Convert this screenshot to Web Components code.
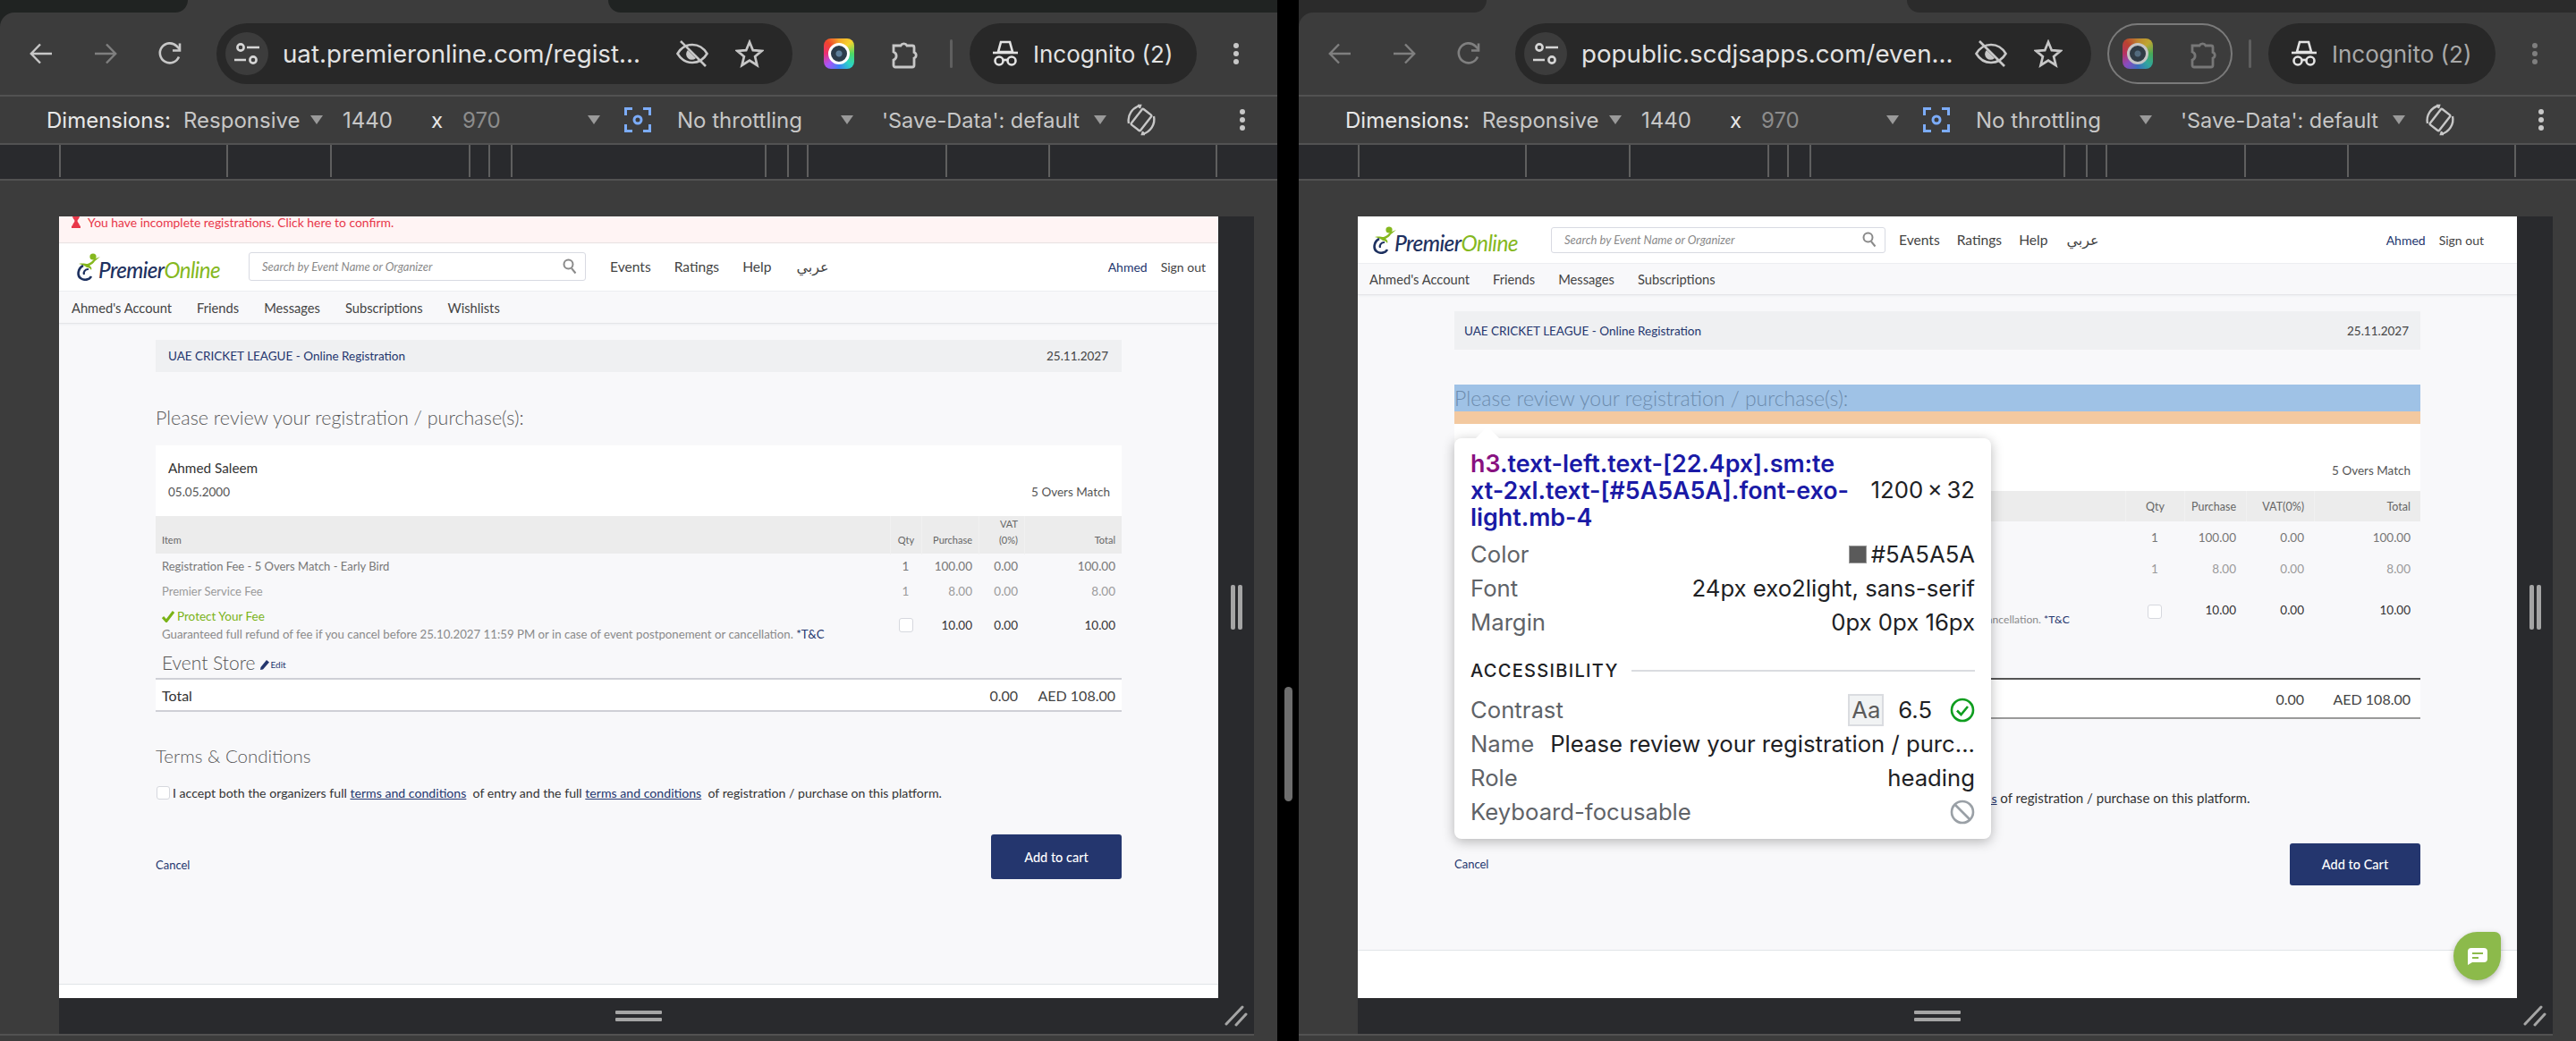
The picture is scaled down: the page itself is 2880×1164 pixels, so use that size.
<!DOCTYPE html>
<html lang="en"><head><meta charset="utf-8"><title>Premier Online</title>
<style>
html,body{margin:0;padding:0;background:#000}
body{width:2880px;height:1164px;overflow:hidden}
</style></head><body>
<split-view>
<browser-window slot="a" url="uat.premieronline.com/regist..." tab-bg="#202322">
  <po-page variant="uat">
    <po-banner>You have incomplete registrations. Click here to confirm.</po-banner>
    <po-header></po-header>
    <po-subnav items="Ahmed's Account|Friends|Messages|Subscriptions|Wishlists"></po-subnav>
    <po-main>
      <po-bar date="25.11.2027">UAE CRICKET LEAGUE - Online Registration</po-bar>
      <po-heading>Please review your registration / purchase(s):</po-heading>
      <po-card name="Ahmed Saleem" date="05.05.2000" match="5 Overs Match"></po-card>
      <reg-head vat-break></reg-head>
      <reg-row tone="a" item="Registration Fee - 5 Overs Match - Early Bird" qty="1" purchase="100.00" vat="0.00" total="100.00"></reg-row>
      <reg-row tone="b" item="Premier Service Fee" qty="1" purchase="8.00" vat="0.00" total="8.00"></reg-row>
      <protect-row purchase="10.00" vat="0.00" total="10.00"></protect-row>
      <event-store></event-store>
      <reg-total vat="0.00" total="AED 108.00"></reg-total>
      <po-terms></po-terms>
      <po-actions label="Add to cart"></po-actions>
    </po-main>
    <po-footer></po-footer>
  </po-page>
</browser-window>
<browser-window slot="b" url="popublic.scdjsapps.com/even..." dim outlined tab-bg="#2b2b2b">
  <po-page variant="pop">
    <po-header></po-header>
    <po-subnav items="Ahmed's Account|Friends|Messages|Subscriptions"></po-subnav>
    <po-main>
      <po-bar date="25.11.2027">UAE CRICKET LEAGUE - Online Registration</po-bar>
      <po-heading inspected>Please review your registration / purchase(s):<devtools-tooltip slot="over"></devtools-tooltip></po-heading>
      <po-card match="5 Overs Match"></po-card>
      <reg-head covered></reg-head>
      <reg-row tone="a" qty="1" purchase="100.00" vat="0.00" total="100.00"></reg-row>
      <reg-row tone="b" qty="1" purchase="8.00" vat="0.00" total="8.00"></reg-row>
      <protect-row covered purchase="10.00" vat="0.00" total="10.00"></protect-row>
      <reg-total covered vat="0.00" total="AED 108.00"></reg-total>
      <po-terms covered></po-terms>
      <po-actions label="Add to Cart"></po-actions>
    </po-main>
    <po-footer></po-footer>
    <chat-bubble></chat-bubble>
  </po-page>
</browser-window>
</split-view>
<script>
const def=(name,css,html)=>customElements.define(name,class extends HTMLElement{
  connectedCallback(){ if(this.shadowRoot) return;
    const r=this.attachShadow({mode:'open'});
    r.innerHTML='<style>'+css+'</style>'+(typeof html==='function'?html(this):html);
  }});
const UI='"Inter","Liberation Sans",sans-serif';
const PO='"Lato","Liberation Sans",sans-serif';

/* ---------- outer split ---------- */
def('split-view',`
:host{display:grid;grid-template-columns:1428px 24px 1428px;width:2880px;height:1164px;background:#000}
.gutter{display:flex;justify-content:center;padding-top:768px;box-sizing:border-box}
.thumb{width:9px;height:128px;border-radius:5px;background:#6e6e6e}
`,`<slot name="a"></slot><div class="gutter"><div class="thumb"></div></div><slot name="b"></slot>`);

/* ---------- browser chrome ---------- */
const ic={
 back:`<svg width="28" height="28" viewBox="0 0 28 28" fill="none" stroke="currentColor" stroke-width="2.4"><path d="M26 14H3M13 3.5L2.8 14 13 24.5"/></svg>`,
 fwd:`<svg width="28" height="28" viewBox="0 0 28 28" fill="none" stroke="currentColor" stroke-width="2.4"><path d="M2 14h23M15 3.5L25.2 14 15 24.5"/></svg>`,
 reload:`<svg width="28" height="28" viewBox="0 0 28 28" fill="none" stroke="currentColor" stroke-width="2.6"><path d="M24 17.5A11 11 0 1 1 21.5 5.5L25 9"/><path d="M25 2.5v8h-8"/></svg>`,
 tune:`<svg width="28" height="26" viewBox="0 0 28 26" fill="none" stroke="currentColor" stroke-width="2.6"><circle cx="7" cy="6" r="3.6"/><path d="M14 6h14M0 20h13"/><circle cx="21" cy="20" r="3.6"/></svg>`,
 eye:`<svg width="36" height="30" viewBox="0 0 36 30" fill="none" stroke="currentColor" stroke-width="2.6"><path d="M1.5 15C6 7.5 12 5 18 5s12 2.500 16.500 10C30 22.500 24 25 18 25S6 22.500 1.500 15z"/><path d="M13 11a6 6 0 0 0 9 9z" fill="currentColor" stroke="none"/><path d="M5 1l28 28"/></svg>`,
 star:`<svg width="32" height="32" viewBox="0 0 32 32" fill="none" stroke="currentColor" stroke-width="2.7" stroke-linejoin="miter"><path d="M16 3l3.800 9.200 9.900.7-7.600 6.400 2.400 9.700L16 23.700 7.500 29l2.400-9.700L2.300 12.900l9.900-.7z"/></svg>`,
 puzzle:`<svg width="30" height="34" viewBox="0 0 30 34" fill="none" stroke="currentColor" stroke-width="2.800"><path d="M3 8h8a4 4 0 0 1 7 0h6a2 2 0 0 1 2 2v5.500a3.500 3.500 0 0 1 0 6.500V30a2 2 0 0 1-2 2H5a2 2 0 0 1-2-2v-6a4.800 4.800 0 0 0 0-9z"/></svg>`,
 spy:`<svg width="30" height="30" viewBox="0 0 30 30" fill="none" stroke="currentColor" stroke-width="2.600"><path d="M10 2h10l3 11H7z"/><path d="M1 14h28"/><circle cx="8" cy="23" r="4.500"/><circle cx="22" cy="23" r="4.500"/><path d="M12.500 22h5"/></svg>`,
 dots:`<svg width="8" height="26" viewBox="0 0 8 26" fill="currentColor"><circle cx="4" cy="4" r="3"/><circle cx="4" cy="13" r="3"/><circle cx="4" cy="22" r="3"/></svg>`,
 capture:`<svg width="30" height="28" viewBox="0 0 30 28" fill="none" stroke="#7cacf8" stroke-width="3"><path d="M9 1.500H1.500V9M21 1.500h7.500V9M9 26.500H1.500V19M21 26.500h7.500V19"/><circle cx="15" cy="14" r="4"/></svg>`,
 rotate:`<svg width="36" height="36" viewBox="0 0 36 36" fill="none" stroke="#c7c7c7" stroke-width="2.400"><rect x="11.500" y="7" width="13" height="22" rx="1.500" transform="rotate(38 18 18)"/><path d="M4 22C2 13 8 4 17 2M14 2l3 0-1 3"/><path d="M32 14c2 9-4 18-13 20M22 34l-3 0 1-3"/></svg>`
};
def('browser-window',`
:host{display:block;width:1428px;height:1164px;background:#3c3c3c;font-family:${UI};overflow:hidden}
.tabs{display:flex;height:14px;background:#3c3c3c}
.tabs i{display:block;background:var(--t)}
.tabs i:first-child{width:210px;border-bottom-right-radius:14px}
.tabs b{display:block;width:470px}
.tabs i:last-child{flex:1;border-bottom-left-radius:14px}
.bgwrap{background:var(--t)}
.bar{height:92px;background:#3c3c3c;border-radius:16px 0 0 0;display:flex;align-items:center;color:#c7c7c7;box-sizing:border-box;padding-left:10px}
.nb{width:72px;display:flex;justify-content:center}
.dimc{color:#7f7f7f}
.omni{margin-left:16px;width:644px;height:68px;border-radius:34px;background:#282828;display:flex;align-items:center;box-sizing:border-box;padding:0 16px 0 10px}
.site{width:48px;height:48px;border-radius:50%;background:#3c3c3c;display:flex;align-items:center;justify-content:center;color:#d5d5d5;flex:none}
.url{flex:1;margin-left:16px;font-size:27.700px;color:#e3e3e3;white-space:nowrap;overflow:hidden}
.oi{width:64px;display:flex;justify-content:center;flex:none}
.ext{margin-left:18px;width:140px;height:68px;box-sizing:border-box;border:2px solid transparent;border-radius:34px;display:flex;align-items:center;padding-left:15px}
:host([outlined]) .ext{border-color:#7a7a7a}
.app{width:34px;height:34px;border-radius:8px;background:conic-gradient(#f4a62a,#f6d32d,#4cd964,#2bd3c6,#3b82f6,#a855f7,#ec2f75,#f0462c,#f4a62a);display:flex;align-items:center;justify-content:center;flex:none}
.app span{width:18px;height:18px;border-radius:50%;background:radial-gradient(circle,#5e7f9a 0 3px,#2c3c4b 4px 100%);border:3.500px solid #fff}
:host([outlined]) .app{opacity:.7}
.pz{margin-left:41px;display:flex}
:host([outlined]) .pz{color:#777}
.div{margin-left:18px;width:3px;height:32px;background:#5f5f5f;border-radius:2px}
.inc{margin-left:19px;width:254px;height:68px;border-radius:34px;background:#282828;display:flex;align-items:center;padding-left:25px;box-sizing:border-box;color:#e3e3e3;font-size:26px;gap:16px;white-space:nowrap}
:host([outlined]) .inc span{color:#a8a8a8}
.mn{margin-left:40px;display:flex}
.line{height:2px;background:#525252}
.dev{height:52px;display:grid;grid-template-columns:52px 153px 140px 38px 89px 45px 138px 43px 59px 181px 48px 235px 37px 127px 20px;align-items:center;font-size:24px;color:#c7c7c7;white-space:nowrap}
.dev .tri{width:0;height:0;border-left:7px solid transparent;border-right:7px solid transparent;border-top:10px solid #9a9a9a;margin-left:2px}
.dev .w{color:#e8e8e8}.dev .g{color:#8c8c8c}
.dev .sd{font-size:23.500px}
.dev svg{display:block}
.ruler{height:38px;background:#292a2d}
.ruler svg{display:block}
.vp{display:grid;grid-template-columns:66px 1296px 40px 26px;grid-template-rows:40px 874px 40px 2px 6px}
.hold{grid-column:2/3;grid-row:2}
.dk{background:#292a2d;display:flex;align-items:center;justify-content:center}
.side{grid-column:3;grid-row:2;gap:3px}
.side i{display:block;width:5px;height:50px;background:#a5a5a5;border-radius:2px}
.bot{grid-column:2;grid-row:3;flex-direction:column;gap:4px}
.bot i{display:block;width:52px;height:4px;background:#a5a5a5;border-radius:1px}
.corner{grid-column:3;grid-row:3}
.bl{grid-column:1/4;grid-row:4;background:#525252}
::slotted(po-page){height:874px}
`,h=>{
 const d=h.hasAttribute('dim');
 const ticks=[67,254,370,525,547,572,856,881,903,1058,1173,1360].map(x=>'M'+x+' 0v36').join('');
 return `<div style="--t:${h.getAttribute('tab-bg')}">
 <div class="tabs"><i></i><b></b><i></i></div>
 <div class="bgwrap"><div class="bar">
  <div class="nb ${d?'dimc':''}">${ic.back}</div><div class="nb dimc">${ic.fwd}</div><div class="nb ${d?'dimc':''}">${ic.reload}</div>
  <div class="omni"><div class="site">${ic.tune}</div><div class="url">${h.getAttribute('url')}</div><div class="oi">${ic.eye}</div><div class="oi">${ic.star}</div></div>
  <div class="ext"><div class="app"><span></span></div><div class="pz">${ic.puzzle}</div></div>
  <div class="div"></div>
  <div class="inc">${ic.spy}<span>Incognito (2)</span></div>
  <div class="mn ${d?'dimc':''}">${ic.dots}</div>
 </div></div></div>
 <div class="line"></div>
 <div class="dev"><span></span><span class="w">Dimensions:</span><span>Responsive</span><div class="tri"></div><span>1440</span><span class="w" style="padding-left:10px">x</span><span class="g">970</span><div class="tri"></div><div>${ic.capture}</div><span>No throttling</span><div class="tri"></div><span class="sd">'Save-Data': default</span><div class="tri"></div><div>${ic.rotate}</div><div style="color:#c7c7c7">${ic.dots}</div></div>
 <div class="line"></div>
 <div class="ruler"><svg width="1428" height="38"><path d="${ticks}" stroke="#5f5f5f" stroke-width="2"/></svg></div>
 <div class="line"></div>
 <div class="vp">
  <div class="hold"><slot></slot></div>
  <div class="dk side"><i></i><i></i></div>
  <div class="dk bot"><i></i><i></i></div>
  <div class="dk corner"><svg width="26" height="26" viewBox="0 0 26 26" stroke="#a5a5a5" stroke-width="3" stroke-linecap="round"><path d="M2 22L20 3M13 23L24 11"/></svg></div>
  <div class="bl"></div>
 </div>`;
});

/* ---------- Premier Online page ---------- */
def('po-page',`
:host{display:flex;flex-direction:column;position:relative;height:874px;background:#f8f8fa;font-family:${PO};color:#444;font-size:13px;overflow:hidden;
 --cols:821px 35px 64px 51px 109px;--pad:7px;--rowh:28px;--headh:42px;--cardh:79px;--hdrh:55px;--subh:36px;--barh:36px;
 --h3gap:36px;--h3mb:16px;--h3fs:21.500px;--rr:47px;--toth:34px;--tl1:#cfd0d6;--tl2:#cfd0d6;--actmt:37px;--footh:16px;--termmt:36px;
 --srchw:377px;--srchh:32px;--hpl:20px;--logow:192px;--navml:27px;--navgap:26px;--hpr:14px;--subpl:14px;--subgap:28px;--cancelmb:8px;--chkmt:18px;--gsize:13.240px;
 --hfs:11px;--vpt:14px;--gpt:4px;--cpt:16px;--btnh:50px;--cardpr:13px;--barpr:15px;--tail:14.130px;--logofs:24.200px}
:host([variant=pop]){--cols:750px 66px 69px 76px 119px;--pad:11px;--rowh:35px;--headh:34px;--cardh:75px;--hdrh:53px;--subh:35px;--barh:43px;
 --h3gap:39px;--h3mb:0px;--h3fs:23px;--rr:105px;--toth:42px;--tl1:#555;--tl2:#9a9a9a;--actmt:41px;--footh:54px;--termmt:34px;
 --srchw:374px;--srchh:29px;--hpl:17px;--logow:199px;--navml:15px;--navgap:19px;--hpr:37px;--subpl:13px;--subgap:26px;--cancelmb:16px;--gsize:12.100px;
 --hfs:12.500px;--vpt:19px;--gpt:10px;--cpt:23px;--btnh:47px;--cardpr:11px;--barpr:13px;--tail:15.100px;--logofs:24.500px}
`,`<slot></slot>`);

def('po-banner',`
:host{display:flex;align-items:flex-start;height:29px;background:#fff4f4;color:#e8384a;font-size:13.900px;line-height:14px;padding-left:14px;box-shadow:0 1px 1px #e9e3e3;position:relative;z-index:2;overflow:hidden;white-space:nowrap;flex:none}
svg{margin-top:-3px;margin-right:8px;flex:none}
span{display:block}
`,`<svg width="10" height="16" viewBox="0 0 10 16" fill="#e8384a"><path d="M0 0h10v2.500H9c0 3-2.500 4-2.500 5.500S9 11 9 13.500h1V16H0v-2.500h1C1 11 3.500 9.500 3.500 8S1 5.500 1 2.500H0z"/></svg><span><slot></slot></span>`);

def('po-logo',`
:host{display:flex;align-items:flex-end;flex:none;height:31px}
svg{flex:none;display:block}
.t{font:italic 500 var(--logofs)/24px ${PO};letter-spacing:-.6px;margin-left:-4px;white-space:nowrap}
.p{color:#1e3160}.o{color:#85b81e;font-weight:400}
`,`<svg width="28" height="31" viewBox="0 0 28 31" fill="none"><circle cx="18" cy="4" r="3.600" fill="#85b81e"/><path d="M2 12c5-1 7 0 10 0 3-1 5-3 7-5l7-3-6 5c-1 2-4 4-6 5 2 1 3 3 2 5-1-2-3-3-5-3-2-2-5-3-9-4z" fill="#85b81e"/><path d="M7 14C1 17 0 25 4 28c4 3 10 2 12-2" stroke="#1e3160" stroke-width="2.600"/><path d="M8 24c-1-3 1-6 5-6" stroke="#1e3160" stroke-width="2.200"/></svg><div class="t"><span class="p">Premier</span><span class="o">Online</span></div>`);

def('po-header',`
:host{display:flex;align-items:center;height:var(--hdrh);flex:none;background:#fff;box-sizing:border-box;padding:0 var(--hpr) 0 var(--hpl);font-size:15.600px;color:#444;white-space:nowrap;border-bottom:1px solid #eceef1}
.lw{width:var(--logow);flex:none}
.s{width:var(--srchw);height:var(--srchh);border:1.500px solid #d8dae2;border-radius:3px;box-sizing:border-box;display:flex;align-items:center;justify-content:space-between;padding:0 9px 0 14px;color:#8a8a8a;font-style:italic;font-size:13px;flex:none}
.s svg{flex:none}
nav{display:flex;gap:var(--navgap);margin-left:var(--navml);align-items:center}
.ar{font-family:"DejaVu Sans",sans-serif;font-size:16px;margin-left:2px}
.u{margin-left:auto;display:flex;gap:15px;font-size:14px}
.u b{font-weight:400;color:#24366e}
`,`<div class="lw"><po-logo></po-logo></div><div class="s"><span>Search by Event Name or Organizer</span><svg width="16" height="18" viewBox="0 0 16 18" fill="none" stroke="#8a8a8a" stroke-width="2"><circle cx="6.500" cy="6.500" r="5"/><path d="M10 11l4.500 5.500"/></svg></div><nav><span>Events</span><span>Ratings</span><span>Help</span><span class="ar" lang="ar">عربي</span></nav><div class="u"><b>Ahmed</b><span>Sign out</span></div>`);

def('po-subnav',`
:host{display:flex;align-items:center;height:var(--subh);flex:none;box-sizing:border-box;padding-left:var(--subpl);gap:var(--subgap);background:#f8f8fa;font-size:14.700px;color:#444;border-bottom:1px solid #e4e5e8;box-shadow:0 1px 2px #eceef1;white-space:nowrap}
`,h=>h.getAttribute('items').split('|').map(t=>`<span>${t}</span>`).join(''));

def('po-main',`
:host{display:flex;flex-direction:column;flex:1;margin:0 108px;padding-top:18px;width:1080px;min-height:0}
`,`<slot></slot>`);

def('po-bar',`
:host{display:flex;align-items:center;justify-content:space-between;height:var(--barh);flex:none;background:#eff0f2;padding:0 var(--barpr) 0 14px;font-size:13.500px;color:#24366e;white-space:nowrap}
:host-context(po-page[variant=pop]){padding-left:11px}
.d{color:#444}
`,h=>`<span><slot></slot></span><span class="d">${h.getAttribute('date')}</span>`);

def('po-heading',`
:host{display:block;position:relative;margin-top:var(--h3gap);margin-bottom:var(--h3mb);flex:none}
h3{margin:0;font:300 var(--h3fs)/30px ${PO};color:#5a5a5a;white-space:nowrap}
:host([inspected]) h3{background:#9fc2e6;color:#6d8cad}
.m{height:14px;background:#f3c9a0;display:none}
:host([inspected]) .m{display:block}
`,`<h3><slot></slot></h3><div class="m"></div><slot name="over"></slot>`);

def('po-card',`
:host{display:flex;flex-direction:column;height:var(--cardh);flex:none;background:#fff;padding:14px var(--cardpr) 0 14px;box-sizing:border-box;font-size:13.500px;color:#555;white-space:nowrap}
.n{color:#333;font-size:15.300px;line-height:22px;min-height:22px}
.r{display:flex;justify-content:space-between;margin-top:8px}
`,h=>`<div class="n">${h.getAttribute('name')||''}</div><div class="r"><span>${h.getAttribute('date')||''}</span><span>${h.getAttribute('match')}</span></div>`);

const cell=`display:flex;align-items:center;box-sizing:border-box`;
def('reg-head',`
:host{display:grid;grid-template-columns:var(--cols);height:var(--headh);flex:none;background:#ececec;font-size:var(--hfs);color:#666}
div{${cell};padding-right:var(--pad);justify-content:flex-end;text-align:right;line-height:18px;align-items:flex-end;padding-bottom:7px;border-left:1px solid #f1f1f1;white-space:nowrap}
div.f{justify-content:flex-start;padding-left:var(--pad);border:0}
:host([covered]) div.f span{visibility:hidden}
div.q{justify-content:center;padding:0 0 7px}
`,h=>`<div class="f"><span>Item</span></div><div class="q">Qty</div><div>Purchase</div><div>${h.hasAttribute('vat-break')?'VAT<br>(0%)':'VAT(0%)'}</div><div>Total</div>`);

def('reg-row',`
:host{display:grid;grid-template-columns:var(--cols);height:var(--rowh);flex:none;font-size:13.500px;color:#777;white-space:nowrap}
:host([tone=b]){color:#9a9a9a}
div{${cell};justify-content:flex-end;padding-right:var(--pad)}
div.f{justify-content:flex-start;padding-left:var(--pad);font-size:13px}
div.q{justify-content:center;padding:0}
`,h=>`<div class="f">${h.getAttribute('item')||''}</div><div class="q">${h.getAttribute('qty')}</div><div>${h.getAttribute('purchase')}</div><div>${h.getAttribute('vat')}</div><div>${h.getAttribute('total')}</div>`);

def('protect-row',`
:host{display:grid;grid-template-columns:var(--cols);height:var(--rr);flex:none;font-size:13.500px;color:#333;white-space:nowrap;align-items:start}
.i{padding:var(--gpt) 0 0 var(--pad);line-height:20px;min-width:0}
.p{color:#7ab317;display:flex;align-items:center;gap:3px}
:host([covered]) .p{visibility:hidden}
.g{color:#8a8a8a;font-size:var(--gsize)}
.g b{font-weight:400;color:#24366e}
.v{text-align:right;padding:var(--vpt) var(--pad) 0 0;line-height:20px}
.c{display:flex;justify-content:center;padding-top:var(--cpt)}
.c i{display:block;width:16px;height:16px;box-sizing:border-box;border:1.500px solid #d6d8de;border-radius:3px;background:#fff}
`,h=>`<div class="i"><div class="p"><svg width="14" height="13" viewBox="0 0 14 13"><path d="M1 7l4 4.500L13 1" fill="none" stroke="#7ab317" stroke-width="3"/></svg>Protect Your Fee</div><div class="g">Guaranteed full refund of fee if you cancel before 25.10.2027 11:59 PM or in case of event postponement or cancellation. <b>*T&amp;C</b></div></div><div class="c"><i></i></div><div class="v">${h.getAttribute('purchase')}</div><div class="v">${h.getAttribute('vat')}</div><div class="v">${h.getAttribute('total')}</div>`);

def('event-store',`
:host{display:flex;align-items:center;height:36px;flex:none;padding-left:var(--pad);gap:5px;font-size:21px;font-weight:300;color:#555;white-space:nowrap}
a{display:flex;align-items:center;gap:2px;font-size:10px;font-weight:400;color:#24366e;margin-top:6px}
`,`<span>Event Store</span><a><svg width="10" height="11" viewBox="0 0 10 11" fill="#24366e"><path d="M7 0l3 2.500L3 10.500 0 11l.5-3z"/></svg>Edit</a>`);

def('reg-total',`
:host{display:grid;grid-template-columns:var(--cols);height:var(--toth);flex:none;background:#fff;font-size:16px;color:#444;border-top:2px solid var(--tl1);border-bottom:2px solid var(--tl2);white-space:nowrap}
div{${cell};justify-content:flex-end;padding-right:var(--pad)}
div.f{justify-content:flex-start;padding-left:var(--pad);color:#333}
:host([covered]) div.f span{visibility:hidden}
`,h=>`<div class="f"><span>Total</span></div><div></div><div></div><div>${h.getAttribute('vat')}</div><div>${h.getAttribute('total')}</div>`);

def('po-terms',`
:host{display:block;margin-top:var(--termmt);flex:none}
h4{margin:0;font:300 20.500px/26px ${PO};color:#5a5a5a}
:host([covered]) h4{visibility:hidden}
.r{display:flex;align-items:center;margin-top:var(--chkmt);height:20px;font-size:14.130px;color:#333;white-space:nowrap}
i{display:block;width:15px;height:15px;box-sizing:border-box;border:1.500px solid #d6d8de;border-radius:3px;background:#fff;margin-right:3px;margin-left:1px;flex:none}
a{color:#24366e;text-decoration:underline}
.tail{font-size:var(--tail)}
`,h=>{const sp=h.hasAttribute('covered')?' ':'&nbsp; ';return `<h4>Terms &amp; Conditions</h4><div class="r"><i></i><span>I accept both the organizers full <a>terms and conditions</a>${sp}of entry and the full <a>terms and conditions</a>${sp}<span class="tail">of registration / purchase on this platform.</span></span></div>`});

def('po-actions',`
:host{display:flex;justify-content:space-between;align-items:flex-end;margin-top:var(--actmt);flex:none}
a{color:#24366e;font-size:13px;margin-bottom:var(--cancelmb)}
button{all:unset;box-sizing:border-box;display:flex;align-items:center;justify-content:center;width:146px;height:var(--btnh);background:#24366e;color:#fff;font:500 14.500px ${PO};border-radius:3px}
`,h=>`<a>Cancel</a><button>${h.getAttribute('label')}</button>`);

def('po-footer',`
:host{display:block;height:var(--footh);flex:none;background:#fff;border-top:1px solid #e1e5e8;margin-top:auto;box-sizing:border-box}
`,``);

def('chat-bubble',`
:host{position:absolute;right:18px;bottom:20px;width:53px;height:54px;background:#8cba4b;border-radius:50% 7px 50% 50%;box-shadow:0 3px 7px rgba(0,0,0,.28);display:flex;align-items:center;justify-content:center}
`,`<svg width="22" height="19" viewBox="0 0 22 19"><path d="M4 0h14a4 4 0 0 1 4 4v8a4 4 0 0 1-4 4H5l-5 3V4a4 4 0 0 1 4-4z" fill="#fff"/><path d="M5 6h12M5 11h7" stroke="#8cba4b" stroke-width="2"/></svg>`);

/* ---------- DevTools inspect tooltip ---------- */
def('devtools-tooltip',`
:host{position:absolute;left:0;top:60px;width:600px;height:448px;background:#fff;border-radius:8px;box-shadow:0 3px 14px rgba(0,0,0,.28);box-sizing:border-box;padding:13px 18px 0;font:400 25.700px/38px ${UI};color:#202124;z-index:5;white-space:nowrap}
.arr{position:absolute;left:24px;top:-13px;width:0;height:0;border-left:13px solid transparent;border-right:13px solid transparent;border-bottom:13px solid #fff}
.h{display:flex;justify-content:space-between;align-items:center;line-height:30px;margin-bottom:8px}
.t{font-weight:600;color:#1a1aa6;font-size:26.800px}
.t em{font-style:normal;color:#881280}
.r{display:flex;justify-content:space-between;align-items:center;height:38px}
.l{color:#5f6368}
.v{display:flex;align-items:center}
.sw{width:20px;height:20px;background:#5a5a5a;border:1px solid #999;box-sizing:border-box;margin-right:5px}
.a{display:flex;align-items:center;gap:14px;height:34px;margin:18px 0 8px;font-size:20px;font-weight:500;letter-spacing:1.300px;color:#202124}
.a i{display:block;flex:1;height:2px;background:#dadce0}
.aa{width:40px;height:36px;box-sizing:border-box;border:2px solid #dadce0;background:#f1f3f4;display:flex;align-items:center;justify-content:center;margin-right:16px;color:#5a5a5a}
.n{margin-right:20px}
svg{display:block}
`,`<div class="arr"></div>
<div class="h"><div class="t"><em>h3</em>.text-left.text-[22.4px].sm:te<br>xt-2xl.text-[#5A5A5A].font-exo-<br>light.mb-4</div><div>1200&#8201;×&#8201;32</div></div>
<div class="r"><span class="l">Color</span><span class="v"><span class="sw"></span>#5A5A5A</span></div>
<div class="r"><span class="l">Font</span><span>24px exo2light, sans-serif</span></div>
<div class="r"><span class="l">Margin</span><span>0px 0px 16px</span></div>
<div class="a"><span>ACCESSIBILITY</span><i></i></div>
<div class="r"><span class="l">Contrast</span><span class="v"><span class="aa">Aa</span><span class="n">6.5</span><svg width="28" height="28" viewBox="0 0 28 28" fill="none" stroke="#0f9d1f" stroke-width="2.600"><circle cx="14" cy="14" r="12"/><path d="M8 14.500l4.500 4.500L20 10"/></svg></span></div>
<div class="r"><span class="l">Name</span><span>Please review your registration / purc...</span></div>
<div class="r"><span class="l">Role</span><span>heading</span></div>
<div class="r"><span class="l">Keyboard-focusable</span><svg width="28" height="28" viewBox="0 0 28 28" fill="none" stroke="#9aa0a6" stroke-width="2.600"><circle cx="14" cy="14" r="12"/><path d="M5.500 5.500l17 17"/></svg></div>`);
</script>
</body></html>
